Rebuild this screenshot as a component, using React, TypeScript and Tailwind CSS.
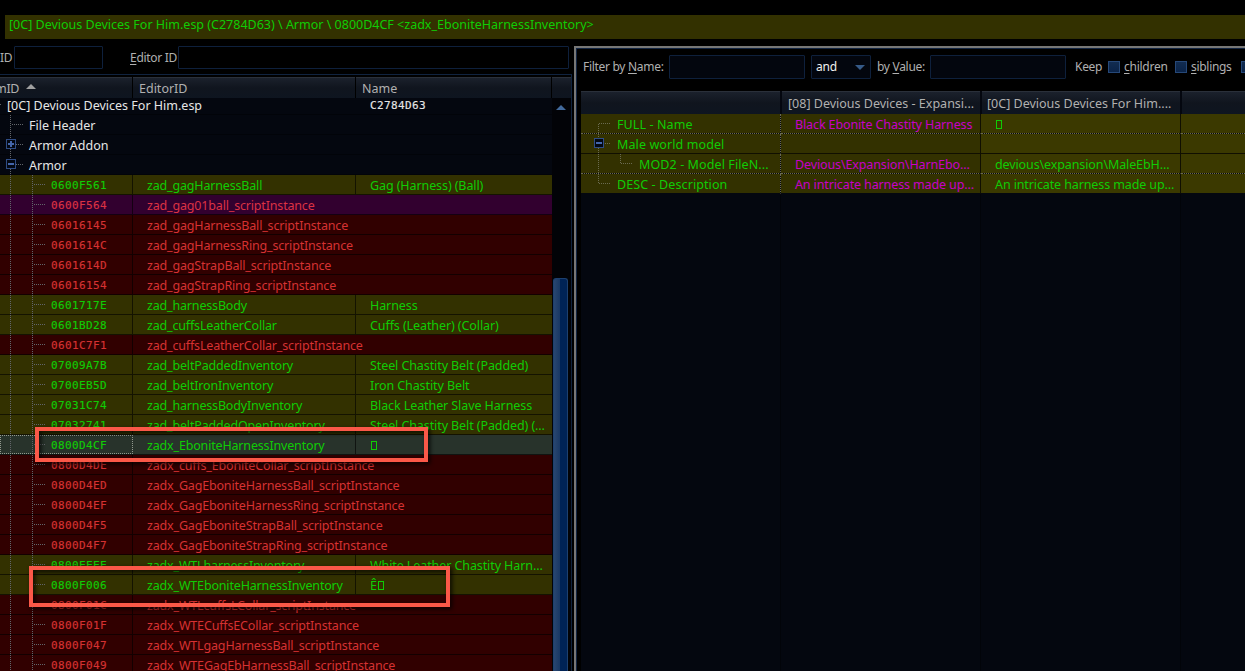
import React from "react";

type Tone = "plain" | "olive" | "purple" | "red" | "selected";

interface RecordRow {
  id: string;
  editor: string;
  name?: string;
  tone: Tone;
}

const records: RecordRow[] = [
  { id: "0600F561", editor: "zad_gagHarnessBall", name: "Gag (Harness) (Ball)", tone: "olive" },
  { id: "0600F564", editor: "zad_gag01ball_scriptInstance", tone: "purple" },
  { id: "06016145", editor: "zad_gagHarnessBall_scriptInstance", tone: "red" },
  { id: "0601614C", editor: "zad_gagHarnessRing_scriptInstance", tone: "red" },
  { id: "0601614D", editor: "zad_gagStrapBall_scriptInstance", tone: "red" },
  { id: "06016154", editor: "zad_gagStrapRing_scriptInstance", tone: "red" },
  { id: "0601717E", editor: "zad_harnessBody", name: "Harness", tone: "olive" },
  { id: "0601BD28", editor: "zad_cuffsLeatherCollar", name: "Cuffs (Leather) (Collar)", tone: "olive" },
  { id: "0601C7F1", editor: "zad_cuffsLeatherCollar_scriptInstance", tone: "red" },
  { id: "07009A7B", editor: "zad_beltPaddedInventory", name: "Steel Chastity Belt (Padded)", tone: "olive" },
  { id: "0700EB5D", editor: "zad_beltIronInventory", name: "Iron Chastity Belt", tone: "olive" },
  { id: "07031C74", editor: "zad_harnessBodyInventory", name: "Black Leather Slave Harness", tone: "olive" },
  { id: "07032741", editor: "zad_beltPaddedOpenInventory", name: "Steel Chastity Belt (Padded) (...", tone: "olive" },
  { id: "0800D4CF", editor: "zadx_EboniteHarnessInventory", name: "▯", tone: "selected" },
  { id: "0800D4DE", editor: "zadx_cuffs_EboniteCollar_scriptInstance", tone: "red" },
  { id: "0800D4ED", editor: "zadx_GagEboniteHarnessBall_scriptInstance", tone: "red" },
  { id: "0800D4EF", editor: "zadx_GagEboniteHarnessRing_scriptInstance", tone: "red" },
  { id: "0800D4F5", editor: "zadx_GagEboniteStrapBall_scriptInstance", tone: "red" },
  { id: "0800D4F7", editor: "zadx_GagEboniteStrapRing_scriptInstance", tone: "red" },
  { id: "0800EEEE", editor: "zadx_WTLharnessInventory", name: "White Leather Chastity Harn...", tone: "olive" },
  { id: "0800F006", editor: "zadx_WTEboniteHarnessInventory", name: "Ê▯", tone: "olive" },
  { id: "0800F01C", editor: "zadx_WTLcuffsLCollar_scriptInstance", tone: "red" },
  { id: "0800F01F", editor: "zadx_WTECuffsECollar_scriptInstance", tone: "red" },
  { id: "0800F047", editor: "zadx_WTLgagHarnessBall_scriptInstance", tone: "red" },
  { id: "0800F049", editor: "zadx_WTEGagEbHarnessBall_scriptInstance", tone: "red" },
];

const tones: Record<Tone, string> = {
  plain: "bg-[#04070f] text-[#e6e6e6]",
  olive: "bg-[#333100] text-[#10cc05]",
  purple: "bg-[#32002f] text-[#dc3244]",
  red: "bg-[#310000] text-[#d63232]",
  selected: "bg-[#28332b] text-[#10cc05]",
};

const headerCell = "bg-linear-to-b from-[#1b212c] via-[#10151e] to-[#0e1520] border-t border-[#2a303a] text-[#b0b0b0]";
const input = "border border-[#0e203c] rounded-[1px]";
const mono = "text-[11px] tracking-[0.38px] font-['DejaVu_Sans_Mono',monospace] [-webkit-text-stroke:0.15px_currentColor]";

// Missing-character box, swapped in for unprintable characters
function Value({ text }: { text: string }) {
  return (
    <>
      {text.split("").map((ch, i) =>
        ch === "▯" ? (
          <span key={i} className="inline-block ml-px w-[6px] h-[9px] border border-current" />
        ) : (
          ch
        )
      )}
    </>
  );
}

type BranchKind = "root" | "leaf" | "open" | "closed" | "record";

function Branches({ kind }: { kind: BranchKind }) {
  const line = { stroke: "#62656a", strokeDasharray: "1 1" };
  return (
    <svg width="48" height="20" viewBox="0 0 48 20" className="block shrink-0">
      {kind === "root" && <path d="M0 9.5H2" {...line} />}
      {kind !== "root" && <path d="M10.5 0V20" {...line} />}
      {kind === "record" && <path d="M32.5 0V20M34 9.5H46" {...line} />}
      {(kind === "leaf" || kind === "open" || kind === "closed") && <path d="M12 9.5H24" {...line} />}
      {(kind === "open" || kind === "closed") && (
        <>
          <rect x="6.5" y="4.5" width="9" height="9" fill="#030812" stroke="#2f4c84" />
          <path d={kind === "open" ? "M8 9H14" : "M8 9H14M11 6V12"} stroke="#4466aa" strokeWidth="2" />
        </>
      )}
    </svg>
  );
}

function GroupRow({ kind, label, value }: { kind: BranchKind; label: string; value?: string }) {
  return (
    <div className={`flex h-5 shrink-0 border-b border-[#020409] ${tones.plain}`}>
      <div className="flex w-[356px] h-5">
        <Branches kind={kind} />
        <span className={`leading-[22px] ${kind === "root" ? "-ml-[41px]" : "-ml-[19px]"}`}>{label}</span>
      </div>
      {value && <span className={`pl-[14px] leading-[21px] ${mono}`}>{value}</span>}
    </div>
  );
}

function RecordLine({ row }: { row: RecordRow }) {
  return (
    <div className={`flex h-5 shrink-0 border-b border-black/60 ${tones[row.tone]}`}>
      <div
        className={`flex w-[133px] h-[19px] border-r overflow-hidden ${
          row.tone === "selected" ? "outline-1 -outline-offset-1 outline-dotted outline-[#92998f] border-transparent" : "border-black/60"
        }`}
      >
        <Branches kind="record" />
        <span className={`pl-[3px] leading-[21px] ${mono}`}>{row.id}</span>
      </div>
      <div className={`pl-[14px] w-[223px] whitespace-nowrap leading-[22px] tracking-[-0.17px] ${row.name ? "border-r border-black/60" : ""}`}>
        {row.editor}
      </div>
      {row.name && (
        <div className="pl-[14px] whitespace-nowrap leading-[22px] tracking-[-0.1px]">
          <Value text={row.name} />
        </div>
      )}
    </div>
  );
}

function RecordTree() {
  return (
    <section className="flex flex-col w-[572px] shrink-0 pt-[5px]">
      <div className="flex h-[23px] items-center text-[12px] text-[#b0b0b0] tracking-[-0.3px]">
        <span className="w-[14px]">ID</span>
        <div className={`w-[89px] h-[23px] ${input}`} />
        <span className="w-[75px] pl-[27px] whitespace-nowrap">
          <u className="underline-offset-2">E</u>ditor ID
        </span>
        <div className={`w-[391px] h-[23px] ${input}`} />
      </div>
      <div className="flex flex-col flex-1 min-h-0 mt-[5px] border-t border-r border-[#10233f] pt-[2px]">
        <div className="flex h-[21px] gap-px shrink-0 leading-[21px]">
          <div className={`flex w-[132px] ${headerCell}`}>
            <span className="-ml-[5px] tracking-[-0.3px]">mID</span>
            <svg width="10" height="5" className="ml-[7px] mt-[6px]">
              <path d="M0 5L5 0L10 5Z" fill="#a0a0a0" />
            </svg>
          </div>
          <div className={`w-[222px] pl-[6px] ${headerCell}`}>EditorID</div>
          <div className={`w-[195px] pl-[6px] ${headerCell}`}>Name</div>
          <div className={`flex-1 ${headerCell}`} />
        </div>
        <div className="flex flex-1 min-h-0">
          <div className="flex flex-col w-[552px] overflow-hidden">
            <div className="-mt-[3px] flex flex-col">
              <GroupRow kind="root" label="[0C] Devious Devices For Him.esp" value="C2784D63" />
              <GroupRow kind="leaf" label="File Header" />
              <GroupRow kind="closed" label="Armor Addon" />
              <GroupRow kind="open" label="Armor" />
              {records.map((row) => (
                <RecordLine key={row.id} row={row} />
              ))}
            </div>
          </div>
          {/* Scrollbar */}
          <div className="flex flex-col flex-1 bg-[#020307]">
            <svg width="10" height="5" className="ml-[4px] mt-[7px] shrink-0">
              <path d="M0 5L5 0L10 5Z" fill="#426a9c" />
            </svg>
            <div className="ml-px mt-[168px] w-[15px] flex-1 rounded-t-[3px] border-t border-x border-[#1d406f] bg-linear-to-r from-[#29466f] from-0% via-[#193864] via-45% to-[#002356] to-50%" />
          </div>
        </div>
      </div>
    </section>
  );
}

interface DetailRow {
  label: string;
  left?: string;
  right?: string;
  indent?: boolean;
  toggle?: boolean;
  last?: boolean;
  solid?: boolean;
}

const details: DetailRow[] = [
  { label: "FULL - Name", left: "Black Ebonite Chastity Harness", right: "▯" },
  { label: "Male world model", toggle: true, solid: true },
  { label: "MOD2 - Model FileN...", left: "Devious\\Expansion\\HarnEbo...", right: "devious\\expansion\\MaleEbH...", indent: true },
  { label: "DESC - Description", left: "An intricate harness made up...", right: "An intricate harness made up...", last: true },
];

function DetailLine({ row, index }: { row: DetailRow; index: number }) {
  const line = { stroke: "#6b6b50", strokeDasharray: "1 1" };
  const rule = row.last ? "border-b-transparent" : row.solid ? "border-b-[#100f00]" : "border-b-[#6a6950] [border-bottom-style:dotted]";
  return (
    <div className="flex h-5 text-[#10cc05] leading-[22px] whitespace-nowrap tracking-[-0.12px]">
      <div className={`flex w-[200px] bg-[#333100] bg-clip-padding border-b border-r ${rule} border-r-[#6a6950] [border-right-style:dotted] tracking-[0.1px]`}>
        <svg width="36" height="20" className="block shrink-0">
          <path d={index === 0 ? "M17.5 10V20" : row.last ? "M17.5 0V10" : "M17.5 0V20"} {...line} />
          {!row.indent && <path d="M18 9.5H30" {...line} />}
          {row.toggle && (
            <>
              <rect x="13.5" y="4.5" width="9" height="9" fill="#030812" stroke="#2f4c84" />
              <path d="M15 9H21" stroke="#4466aa" strokeWidth="2" />
            </>
          )}
        </svg>
        {row.indent && (
          <svg width="22" height="20" className="block shrink-0">
            <path d="M3.5 0V9.5H16" fill="none" {...line} />
          </svg>
        )}
        <span>{row.label}</span>
      </div>
      <div className={`w-[200px] pl-[14px] bg-[#333100] bg-clip-padding border-b border-r ${rule} border-r-[#100f00] text-[#c800c8]`}>{row.left}</div>
      <div className={`w-[200px] pl-[14px] bg-[#3b3900] bg-clip-padding border-b border-r ${rule} border-r-[#100f00]`}>
        {row.right && <Value text={row.right} />}
      </div>
      <div className={`flex-1 bg-[#3b3900] bg-clip-padding border-b ${rule}`} />
    </div>
  );
}

function Check() {
  return <span className="w-3 h-3 shrink-0 border border-[#264878] bg-linear-to-b from-[#122c50] to-[#0a2348]" />;
}

function DetailPanel() {
  return (
    <section className="flex flex-col flex-1 min-w-0 mt-[5px] ml-[2px] border-t-2 border-l-2 border-[#777777]">
      <div className="flex flex-col flex-1 min-w-0 border-t border-l border-[#122441] pl-[4px] pt-[6px]">
        <div className="flex h-[24px] items-center text-[12px] text-[#b0b0b0] whitespace-nowrap tracking-[-0.3px] overflow-hidden">
          <span className="w-[88px] shrink-0 pl-[2px]">
            Filter by <u className="underline-offset-2">N</u>ame:
          </span>
          <div className={`w-[136px] h-6 shrink-0 bg-[#03060e] ${input}`} />
          <div className={`flex w-[60px] h-6 ml-[6px] shrink-0 items-center justify-between pl-[4px] pr-[5px] bg-[#03060e] text-[#f0f0f0] tracking-[-0.2px] ${input}`}>
            and
            <svg width="10" height="5">
              <path d="M0 0H10L5 5Z" fill="#365a88" />
            </svg>
          </div>
          <span className="w-[59px] shrink-0 pl-[6px]">
            by <u className="underline-offset-2">V</u>alue:
          </span>
          <div className={`w-[136px] h-6 shrink-0 bg-[#03060e] ${input}`} />
          <span className="w-[42px] pl-[9px] shrink-0">Keep</span>
          <Check />
          <span className="w-[55px] pl-[4px] shrink-0 tracking-[-0.25px]">
            <u className="underline-offset-2">c</u>hildren
          </span>
          <Check />
          <span className="w-[54px] pl-[4px] shrink-0">
            <u className="underline-offset-2">s</u>iblings
          </span>
          <Check />
        </div>
        <div className="flex flex-col flex-1 mt-[12px] bg-[#04070f]">
          <div className="flex h-[23px] gap-[2px] leading-[23px] whitespace-nowrap">
            <div className={`w-[199px] ${headerCell}`} />
            <div className={`w-[198px] pl-[6px] ${headerCell}`}>[08] Devious Devices - Expansi...</div>
            <div className={`w-[198px] pl-[5px] ${headerCell}`}>[0C] Devious Devices For Him....</div>
            <div className={`flex-1 ${headerCell}`} />
          </div>
          {details.map((row, i) => (
            <DetailLine key={row.label} row={row} index={i} />
          ))}
          <div className="flex flex-1">
            <div className="w-[200px] border-r border-[#020409]" />
            <div className="w-[200px] border-r border-[#020409]" />
            <div className="w-[200px] border-r border-[#020409]" />
          </div>
        </div>
      </div>
    </section>
  );
}

export default function App() {
  return (
    <div className="relative flex flex-col w-full h-[671px] overflow-hidden bg-black text-[12.5px] font-['Noto_Sans',sans-serif]">
      <div className="mt-[15px] ml-[5px] h-6 shrink-0 bg-[#333100] text-[#10cc05] pl-[4px] leading-[20px] whitespace-nowrap">
        [0C] Devious Devices For Him.esp (C2784D63) \ Armor \ 0800D4CF &lt;zadx_EboniteHarnessInventory&gt;
      </div>
      <div className="flex flex-1 min-h-0 pt-[2px]">
        <RecordTree />
        <DetailPanel />
      </div>

      {/* Callouts */}
      <div className="absolute left-[35px] top-[427px] w-[393px] h-[35px] border-4 border-[#fb5848] drop-shadow-[2px_2px_2px_rgba(0,0,0,0.85)]" />
      <div className="absolute left-[29px] top-[566px] w-[421px] h-[41px] border-4 border-[#fb5848] drop-shadow-[2px_2px_2px_rgba(0,0,0,0.85)]" />
    </div>
  );
}
